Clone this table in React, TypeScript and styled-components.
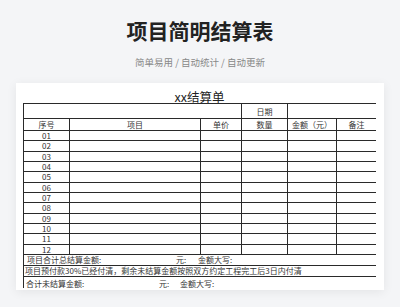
import styled, { createGlobalStyle } from 'styled-components';

const GlobalStyle = createGlobalStyle`
	html, body {
		margin: 0;
		padding: 0;
		background: #f4f5f7;
		font-family: "Noto Sans CJK SC", "Noto Sans", sans-serif;
	}
`;

const columns = [
	{ title: '序号', width: 46 },
	{ title: '项目', width: 131 },
	{ title: '单价', width: 41 },
	{ title: '数量', width: 46 },
	{ title: '金额（元）', width: 49 },
	{ title: '备注', width: 40 },
];

const rows = ['01', '02', '03', '04', '05', '06', '07', '08', '09', '10', '11', '12'];

export default function App() {
	return (
		<>
			<GlobalStyle />
			<Page>
				<Title>项目简明结算表</Title>
				<Subtitle>简单易用 / 自动统计 / 自动更新</Subtitle>
				<Card>
					<Caption>xx结算单</Caption>
					<TableClip>
						<Sheet>
							<colgroup>
								{columns.map((c) => (
									<col key={c.title} style={{ width: c.width }} />
								))}
							</colgroup>
							<tbody>
								<Row $h={15}>
									<Cell colSpan={3} />
									<Cell>日期</Cell>
									<Cell colSpan={2} />
								</Row>
								<Row $h={12}>
									{columns.map((c) => (
										<Cell key={c.title}>{c.title}</Cell>
									))}
								</Row>
								{rows.map((n) => (
									<Row key={n} $h={10.33}>
										<Cell>{n}</Cell>
										<Cell />
										<Cell />
										<Cell />
										<Cell />
										<Cell />
									</Row>
								))}
								<Row $h={11}>
									<WideCell colSpan={6} $pad={3}>
										<SumLine>
											<Label $w={149}>项目合计总结算金额:</Label>
											<Label $w={22}>元:</Label>
											<span>金额大写:</span>
										</SumLine>
									</WideCell>
								</Row>
								<Row $h={11}>
									<WideCell colSpan={6} $pad={1}>
										项目预付款30%已经付清，剩余未结算金额按照双方约定工程完工后3日内付清
									</WideCell>
								</Row>
								<Row $h={14}>
									<WideCell colSpan={6} $pad={2}>
										<SumLine>
											<Label $w={133}>合计未结算金额:</Label>
											<Label $w={21}>元:</Label>
											<span>金额大写:</span>
										</SumLine>
									</WideCell>
								</Row>
							</tbody>
						</Sheet>
					</TableClip>
				</Card>
			</Page>
		</>
	);
}

const Page = styled.div`
	width: 400px;
	height: 307px;
	padding-top: 18px;
	box-sizing: border-box;
	overflow: hidden;
`;

const Title = styled.h1`
	margin: 0;
	font-size: 21px;
	line-height: 24px;
	font-weight: 700;
	color: #222;
	text-align: center;
`;

const Subtitle = styled.p`
	margin: 14px 0 0;
	font-size: 9.5px;
	line-height: 12px;
	color: #888;
	text-align: center;
`;

const Card = styled.div`
	margin: 15px 16px 0;
	width: 368px;
	box-sizing: border-box;
	background: #fff;
	padding: 0 8px 2px 7px;
	box-shadow: 0 2px 10px rgba(0, 0, 0, 0.07);
`;

const Caption = styled.div`
	padding-top: 7px;
	font-size: 12.5px;
	line-height: 13px;
	color: #222;
	text-align: center;
`;

const TableClip = styled.div`
	height: 185px;
	overflow: hidden;
`;

const Sheet = styled.table`
	width: 353px;
	border-collapse: collapse;
	table-layout: fixed;
	font-size: 8px;
	color: #333;
`;

const Row = styled.tr<{ $h: number }>`
	height: ${(p) => p.$h}px;
`;

const Cell = styled.td`
	border: 1px solid #2a2a2a;
	padding: 0;
	text-align: center;
	vertical-align: middle;
	line-height: 9px;
	white-space: nowrap;
	overflow: hidden;
`;

const WideCell = styled(Cell)<{ $pad: number }>`
	text-align: left;
	padding-left: ${(p) => p.$pad}px;
`;

const SumLine = styled.div`
	display: flex;
	align-items: center;
`;

const Label = styled.span<{ $w: number }>`
	width: ${(p) => p.$w}px;
	flex: none;
`;
